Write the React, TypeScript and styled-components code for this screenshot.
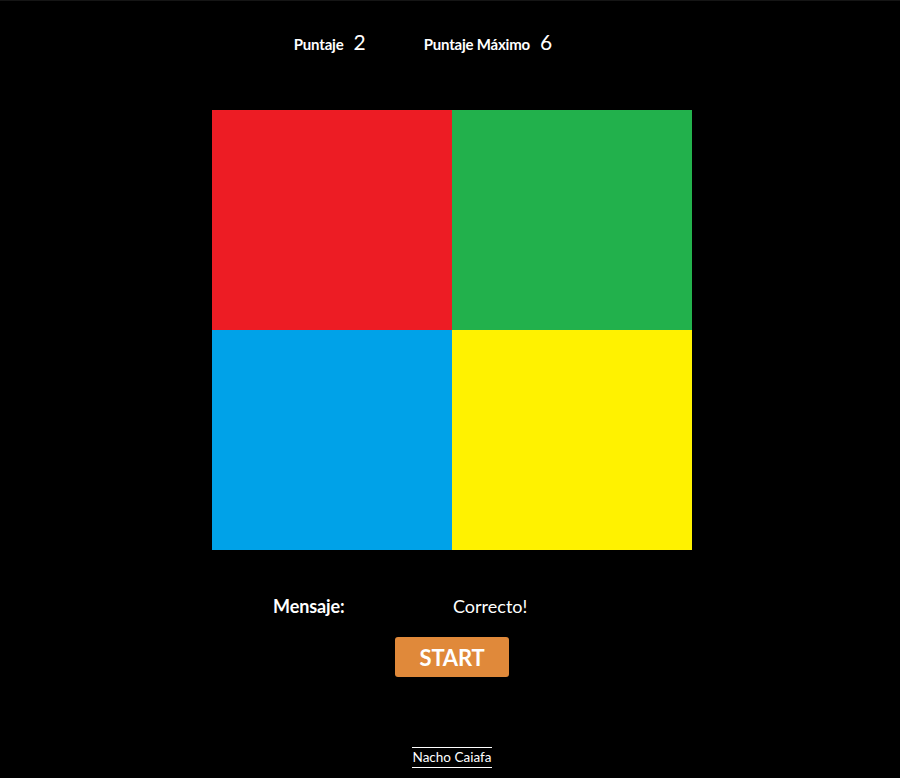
import React from "react";
import styled, { createGlobalStyle } from "styled-components";

const Global = createGlobalStyle`
  html, body { margin: 0; padding: 0; background: #000; }
  body { font-family: Lato, "Open Sans", sans-serif; color: #fff; }
`;

const Page = styled.div`
  width: 900px;
  height: 778px;
  box-sizing: border-box;
  border-top: 1px solid #151515;
  padding-left: 4px;
  display: flex;
  flex-direction: column;
  align-items: center;
`;

const ScoreBar = styled.div`
  display: flex;
  align-items: baseline;
  margin-top: 28px;
  height: 30px;
  margin-right: 58px;
`;

const ScoreItem = styled.div<{ $gap: number }>`
  display: flex;
  align-items: baseline;
  margin-right: ${(p) => p.$gap}px;
`;

const ScoreLabel = styled.span`
  font-weight: 700;
  font-size: 15px;
  letter-spacing: -0.2px;
  margin-right: 10px;
`;

const ScoreValue = styled.span`
  font-size: 21px;
`;

const Board = styled.div`
  margin-top: 51px;
  display: grid;
  grid-template-columns: 240px 240px;
  grid-template-rows: 220px 220px;
`;

const Pad = styled.div<{ $color: string }>`
  background: ${(p) => p.$color};
`;

const MessageRow = styled.div`
  margin-top: 44px;
  display: grid;
  grid-template-columns: 180px auto;
  width: 358px;
  font-size: 18px;
  line-height: 24px;
`;

const MessageLabel = styled.span`
  font-weight: 700;
  letter-spacing: -0.1px;
`;

const MessageText = styled.span`
  font-weight: 400;
`;

const StartButton = styled.button`
  margin-top: 19px;
  width: 114px;
  height: 40px;
  background: #e0893a;
  color: #fff;
  border: none;
  border-radius: 3px;
  font-family: Lato, "Open Sans", sans-serif;
  font-weight: 700;
  font-size: 22px;
  letter-spacing: -0.2px;
  padding: 0;
  cursor: pointer;
`;

const Footer = styled.a`
  margin-top: 70px;
  font-size: 13.5px;
  line-height: 19px;
  color: #fff;
  text-decoration: none;
  border-top: 1px solid #fff;
  border-bottom: 1px solid #fff;
  padding: 0 1px;
`;

export default function App() {
  return (
    <>
      <Global />
      <Page>
        <ScoreBar>
          <ScoreItem $gap={58}>
            <ScoreLabel>Puntaje</ScoreLabel>
            <ScoreValue>2</ScoreValue>
          </ScoreItem>
          <ScoreItem $gap={0}>
            <ScoreLabel>Puntaje Máximo</ScoreLabel>
            <ScoreValue>6</ScoreValue>
          </ScoreItem>
        </ScoreBar>
        <Board>
          <Pad $color="#ed1c24" />
          <Pad $color="#22b14c" />
          <Pad $color="#00a2e8" />
          <Pad $color="#fff200" />
        </Board>
        <MessageRow>
          <MessageLabel>Mensaje:</MessageLabel>
          <MessageText>Correcto!</MessageText>
        </MessageRow>
        <StartButton>START</StartButton>
        <Footer href="#">Nacho Caiafa</Footer>
      </Page>
    </>
  );
}
